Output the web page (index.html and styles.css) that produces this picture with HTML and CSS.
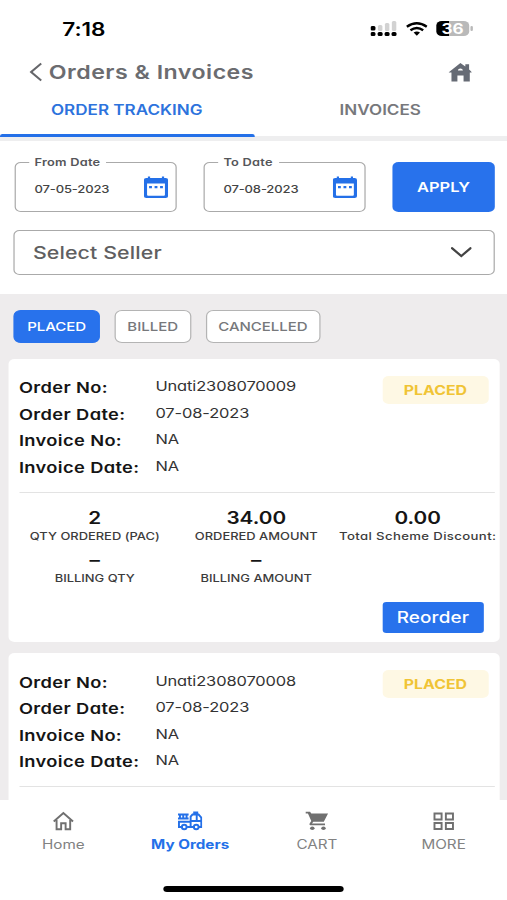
FILE: index.html
```html
<!DOCTYPE html>
<html lang="en">
<head>
<meta charset="utf-8">
<title>Orders &amp; Invoices</title>
<link rel="stylesheet" href="styles.css">
</head>
<body>
<svg width="0" height="0" class="defs">
  <symbol id="calendar" viewBox="0 0 24 22" preserveAspectRatio="none">
    <path fill="#2470e8" fill-rule="evenodd" d="M4 .5h2.200V2h11.600V.5H20V2h1.500Q24 2 24 4.300v15.400Q24 22 21.500 22h-19Q0 22 0 19.700V4.300Q0 2 2.500 2H4zM3.200 7.500v11.300q0 1 1 1h15.600q1 0 1-1V7.500z"/>
    <path fill="#2470e8" d="M5.200 10h2.800v2.300H5.200zM10.600 10h2.800v2.300h-2.800zM16 10h2.800v2.300H16z"/>
  </symbol>
</svg>
<div class="screen">
  <header class="status">
    <span class="time">7:18</span>
    <svg class="signal" viewBox="0 0 27 16" preserveAspectRatio="none">
      <g fill="#d2d2d2"><rect x="7.500" y="4" width="4.500" height="6" rx="1.500"/><rect x="14.500" y="2" width="4.500" height="8" rx="1.500"/><rect x="21.500" y="0" width="4.500" height="10" rx="1.500"/></g>
      <g fill="#000"><rect x="0" y="5" width="5" height="4.500" rx="1.500"/><rect x="0" y="11" width="5" height="4" rx="1.500"/><rect x="7.200" y="11" width="5" height="4" rx="1.500"/><rect x="14.200" y="11" width="5" height="4" rx="1.500"/><rect x="21.200" y="11" width="5" height="4" rx="1.500"/></g>
    </svg>
    <svg class="wifi" viewBox="0 0 22 14" preserveAspectRatio="none">
      <g fill="none" stroke="#000" stroke-width="2.500"><path d="M1 4.800Q11-2.200 21 4.800"/><path d="M4.600 8.300q6.400-4.600 12.800 0"/></g>
      <path d="M7.800 10.600q3.200-2.200 6.400 0L11 13.700z"/>
    </svg>
    <span class="battery"><b>36</b></span>
  </header>
  <div class="title">
    <svg class="back" viewBox="0 0 14 20" preserveAspectRatio="none"><path d="M12.500 1.500 2 10l10.500 8.500" fill="none" stroke="#66676b" stroke-width="2.200"/></svg>
    <h1>Orders &amp; Invoices</h1>
    <svg class="house" viewBox="0 0 24 19" preserveAspectRatio="none"><path fill="#666b75" fill-rule="evenodd" d="M12 0l5 3.600V1.200h3.800v5.300L24 9.400h-2.500V18.500h-6.300v-6H9v6H3V9.400H0zM9.400 7.600h5.200Q14.300 5.500 12 5.500T9.400 7.600z"/></svg>
  </div>
  <nav class="tabs">
    <a class="tab on"><span>ORDER TRACKING</span></a>
    <a class="tab"><span>INVOICES</span></a>
  </nav>
  <section class="filters">
    <div class="dates">
      <div class="date"><label>From Date</label><span>07-05-2023</span><svg><use href="#calendar"/></svg></div>
      <div class="date"><label>To Date</label><span>07-08-2023</span><svg><use href="#calendar"/></svg></div>
      <button class="apply">APPLY</button>
    </div>
    <div class="select"><span>Select Seller</span><svg viewBox="0 0 20 11" preserveAspectRatio="none"><path d="M1 1.200 10 9l9-7.800" fill="none" stroke="#444" stroke-width="2.200" stroke-linecap="round"/></svg></div>
  </section>
  <main>
    <div class="chips"><span class="chip on c1">PLACED</span><span class="chip c2">BILLED</span><span class="chip c3">CANCELLED</span></div>
    <article class="card">
      <div class="info">
        <dl>
          <dt>Order No:</dt><dd>Unati2308070009</dd>
          <dt>Order Date:</dt><dd>07-08-2023</dd>
          <dt>Invoice No:</dt><dd>NA</dd>
          <dt>Invoice Date:</dt><dd>NA</dd>
        </dl>
        <span class="badge">PLACED</span>
      </div>
      <div class="stats">
        <div><b>2</b><small>QTY ORDERED (PAC)</small></div>
        <div><b>34.00</b><small>ORDERED AMOUNT</small></div>
        <div><b>0.00</b><small class="wide">Total Scheme Discount:</small></div>
        <div><b>–</b><small>BILLING QTY</small></div>
        <div><b>–</b><small>BILLING AMOUNT</small></div>
      </div>
      <button class="reorder">Reorder</button>
    </article>
    <article class="card">
      <div class="info">
        <dl>
          <dt>Order No:</dt><dd>Unati2308070008</dd>
          <dt>Order Date:</dt><dd>07-08-2023</dd>
          <dt>Invoice No:</dt><dd>NA</dd>
          <dt>Invoice Date:</dt><dd>NA</dd>
        </dl>
        <span class="badge">PLACED</span>
      </div>
    </article>
  </main>
  <footer>
    <nav class="bar">
      <a><svg viewBox="0 0 24 20" preserveAspectRatio="none"><path d="M2.500 10.500 12 2l9.500 8.500M5.300 9v9.200h4.500v-6h4.400v6h4.500V9" fill="none" stroke="#707070" stroke-width="1.900"/></svg><span>Home</span></a>
      <a class="on"><svg viewBox="0 0 24 20" preserveAspectRatio="none"><g fill="none" stroke="#2470e8" stroke-width="1.900"><path d="M0 3.500h10.500M0 7.500h10.500M2 3.500v4M5.200 3.500v4M8.500 3.500v4M3.500 16H1v-5.200h11.500V5.500l1.800-2h6l2.700 3v9.500h-2.500M9 16h6M12.500 10.300V16M12.500 10h10.500M18.500 4v6M16 3.500v-2h3v2"/><circle cx="6.200" cy="16" r="2.300"/><circle cx="18" cy="16" r="2.300"/></g></svg><span>My Orders</span></a>
      <a><svg viewBox="0 0 24 20" preserveAspectRatio="none"><path fill="#707070" d="M1 .8h4.300l1.200 1.700H23L18.800 10.800H8.500L7.200 12.600H20v1.700H5.500Q4 13.500 5 12.200l1.500-2.300L3.200 2.500H1z"/><ellipse cx="7.500" cy="17.200" rx="2.200" ry="1.700" fill="#707070"/><ellipse cx="18.500" cy="17.200" rx="2.200" ry="1.700" fill="#707070"/></svg><span>CART</span></a>
      <a><svg viewBox="0 0 24 20" preserveAspectRatio="none"><path d="M3 2.500h7v6H3zM14.200 2.500h7v6h-7zM3 12h7v6H3zM14.200 12h7v6h-7z" fill="none" stroke="#707070" stroke-width="1.900"/></svg><span>MORE</span></a>
    </nav>
    <div class="indicator"></div>
  </footer>
</div>
</body>
</html>
```
FILE: styles.css
```css
* { box-sizing: border-box; }
body { margin: 0; width: 507px; height: 900px; overflow: hidden; background: #fff; }
.defs { display: block; }
/* 416px wide layout stretched across the 507px window */
.screen {
  width: 416px; height: 900px; display: flex; flex-direction: column;
  transform: scaleX(1.21875); transform-origin: 0 0;
  font-family: Inter, "Open Sans", sans-serif; font-feature-settings: "cv11", "calt" 0;
  color: #151515; overflow: hidden; background: #fff;
}
button { border: 0; padding: 0; font: inherit; font-feature-settings: inherit; color: #fff; background: #2872ec; }
.status { height: 52px; flex: none; display: flex; align-items: center; padding: 5px 31px 0 51px; }
.time { font-size: 18.500px; font-weight: 600; margin-right: auto; color: #000; }
.signal { width: 22px; height: 16px; margin-top: 1px; }
.wifi { width: 18px; height: 14px; margin: 0 7px 0 7px; }
.battery { width: 27.500px; height: 15px; border-radius: 4.500px; background: linear-gradient(90deg, #000 0 38%, #b9b9b9 38%); position: relative; text-align: center; line-height: 15px; color: #fff; font-size: 14px; }
.battery::after { content: ""; position: absolute; right: -2.500px; top: 5px; width: 1.500px; height: 5px; border-radius: 1px; background: #b9b9b9; }
.title { height: 40px; flex: none; display: flex; align-items: center; padding: 0 29px 0 23.500px; color: #6b6c70; }
.back { width: 11px; height: 20px; }
h1 { margin: 0 auto 0 5.500px; font-size: 19px; font-weight: 600; letter-spacing: .4px; }
.house { width: 19.500px; height: 19px; }
.tabs { height: 49px; flex: none; display: flex; border-bottom: 5px solid #eeeeef; position: relative; }
.tab { flex: 1; text-align: center; font-size: 14px; font-weight: 600; line-height: 17px; padding: 8.500px 0 0; color: #77787c; letter-spacing: 0; }
.tab.on { color: #2d73dd; }
.tab.on::after { content: ""; position: absolute; left: 0; top: 42px; width: 208.500px; height: 3px; background: #2470e8; border-radius: 2px 2px 0 0; }
.filters { height: 153px; flex: none; padding: 21px 10.500px 0 11px; }
.dates { display: flex; padding-left: 1.300px; }
.date { width: 133px; height: 50px; margin-right: 22px; border: 1.500px solid #aaa; border-radius: 5px; position: relative; display: flex; align-items: center; justify-content: space-between; padding: 4px 6px 0 15px; font-size: 10.700px; font-weight: 500; letter-spacing: -.12px; color: #444; }
.date label { position: absolute; top: -8px; left: 11px; padding: 0 5px 0 4px; background: #fff; font-size: 10.500px; font-weight: 600; line-height: 16px; letter-spacing: .2px; color: #55565a; }
.date svg { width: 20px; height: 22px; margin-top: -4px; }
.apply { flex: 1; height: 50px; border-radius: 5px; font-size: 13.500px; font-weight: 600; line-height: 48px; letter-spacing: 0; }
.select { height: 45px; margin-top: 17.500px; border: 1.500px solid #aaa; border-radius: 5px; display: flex; align-items: center; justify-content: space-between; padding: 0 17.500px 0 15px; font-size: 17.500px; font-weight: 500; letter-spacing: .1px; color: #5f5f61; }
.select svg { width: 17px; height: 11px; }
main { flex: 1; min-height: 0; overflow: hidden; background: #eeeced; padding: 16px 6.500px 0 7px; }
.chips { display: flex; padding-left: 4px; margin-bottom: 15.500px; }
.chip { height: 33px; border: 1.300px solid #b4b4b4; border-radius: 6px; background: #fff; color: #77787b; font-size: 12.300px; font-weight: 500; line-height: 32px; text-align: center; letter-spacing: 0; margin-right: 12px; }
.chip.on { background: #2872ec; border-color: #2872ec; color: #fff; }
.c1 { width: 71px; } .c2 { width: 62.500px; } .c3 { width: 94.500px; }
.card { height: 283.500px; margin-bottom: 11px; border-radius: 5px; background: #fff; overflow: hidden; }
.info { height: 134px; margin: 0 4px 0 8.500px; padding-top: 15.500px; border-bottom: 1px solid #e3e3e3; display: flex; justify-content: space-between; }
dl { margin: 0; display: grid; grid-template-columns: 112px auto; grid-auto-rows: 26.600px; white-space: nowrap; }
dt { font-size: 15px; font-weight: 600; line-height: 28px; letter-spacing: .3px; }
dd { margin: 0; font-size: 13.500px; line-height: 24.500px; letter-spacing: -.1px; color: #333; }
.badge { width: 87.500px; height: 28px; margin: 1.500px 4.500px 0 0; border-radius: 5px; background: #fef8e4; color: #f0c435; font-size: 13px; font-weight: 700; line-height: 28px; text-align: center; }
.stats { height: 109px; display: grid; grid-template-columns: repeat(3, 132.500px); grid-template-rows: 42px 42px; padding: 15px 0 0 4.500px; text-align: center; white-space: nowrap; }
.stats b { display: block; font-size: 17px; font-weight: 600; line-height: 21px; }
.stats small { display: block; font-size: 10.600px; font-weight: 500; line-height: 16px; color: #3c3c3c; }
.stats .wide { font-size: 10.800px; letter-spacing: .3px; }
.reorder { display: block; width: 83.500px; height: 31px; margin: 0 0 0 306.500px; border-radius: 3px; font-size: 15.500px; font-weight: 500; line-height: 32px; letter-spacing: .1px; }
footer { height: 100.500px; flex: none; background: #fff; }
.bar { display: flex; padding-top: 11px; }
.bar a { flex: 1; display: flex; flex-direction: column; align-items: center; font-size: 12.500px; line-height: 16px; color: #828282; }
.bar svg { width: 20px; height: 20px; margin-bottom: 6px; }
.bar .on { color: #2470e8; font-weight: 700; }
.indicator { width: 148px; height: 6px; margin: 33px auto 0; border-radius: 3px; background: #000; }
```
